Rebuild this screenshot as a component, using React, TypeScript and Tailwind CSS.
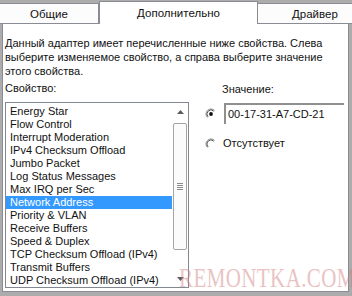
import React from "react";

// Свойства сетевого адаптера — вкладка «Дополнительно»
const PROPS = [
  "Energy Star",
  "Flow Control",
  "Interrupt Moderation",
  "IPv4 Checksum Offload",
  "Jumbo Packet",
  "Log Status Messages",
  "Max IRQ per Sec",
  "Network Address",
  "Priority & VLAN",
  "Receive Buffers",
  "Speed & Duplex",
  "TCP Checksum Offload (IPv4)",
  "Transmit Buffers",
  "UDP Checksum Offload (IPv4)",
];

function Radio({ checked }: { checked?: boolean }) {
  return (
    <svg width="12" height="12" viewBox="0 0 12 12" className="shrink-0">
      <circle cx="6" cy="6" r="5" fill="#fff" />
      <path d="M9.54 2.46 A5 5 0 0 0 2.46 9.54" stroke="#8c8c8c" strokeWidth="1" fill="none" />
      <path d="M8.83 3.17 A4 4 0 0 0 3.17 8.83" stroke="#5a5a5a" strokeWidth="1" fill="none" />
      {checked && <circle cx="6" cy="6" r="1.9" fill="#111" />}
    </svg>
  );
}

function Arrow({ up }: { up?: boolean }) {
  return (
    <svg width="7" height="4" viewBox="0 0 7 4">
      <path d={up ? "M0 4 L3.5 0 L7 4 Z" : "M0 0 L3.5 4 L7 0 Z"} fill="#5c5c5c" />
    </svg>
  );
}

function ListBox() {
  return (
    <div className="mt-[7px] flex h-[186px] w-[184px] border border-[#828790] bg-white">
      <ul className="flex-1 pt-[2px]">
        {PROPS.map((p) => (
          <li
            key={p}
            className={
              p === "Network Address"
                ? "h-[13px] whitespace-nowrap bg-[#3399ff] pl-[4px] text-white"
                : "h-[13px] whitespace-nowrap pl-[4px]"
            }
          >
            {p}
          </li>
        ))}
      </ul>
      {/* полоса прокрутки */}
      <div className="flex w-[16px] flex-col">
        <div className="flex h-[17px] items-center justify-center">
          <Arrow up />
        </div>
        <div className="flex-1 px-px pt-[3px]">
          <div className="flex h-[127px] items-center justify-center rounded-[2px] border border-[#a4a4a4] bg-[#fbfbfb]">
            <div className="flex flex-col gap-[1px]">
              <div className="h-px w-[6px] bg-[#8a8a8a]" />
              <div className="h-px w-[6px] bg-[#8a8a8a]" />
              <div className="h-px w-[6px] bg-[#8a8a8a]" />
              <div className="h-px w-[6px] bg-[#8a8a8a]" />
            </div>
          </div>
        </div>
        <div className="flex h-[17px] items-center justify-center">
          <Arrow />
        </div>
      </div>
    </div>
  );
}

export default function App() {
  return (
    <div className="relative flex h-[296px] w-[352px] flex-col overflow-hidden bg-[#acacac] font-['Liberation_Sans',Arial,sans-serif] text-[11px] leading-[13px] text-[#111]">
      {/* вкладки */}
      <div className="relative z-10 flex h-[24px] items-end text-[11.5px]">
        <div className="flex h-[21px] w-[99px] justify-center border-y border-r border-[#898c95] bg-[#fcfcfc] pt-[4px]">
          Общие
        </div>
        <div className="flex h-[23px] w-[159px] justify-center border-x border-t border-[#898c95] bg-white pt-[5px]">
          Дополнительно
        </div>
        <div className="h-[21px] flex-1 border-y border-[#898c95] bg-[#fcfcfc] pl-[34px] pt-[4px]">
          Драйвер
        </div>
      </div>

      {/* панель вкладки */}
      <div className="-mt-px mb-[4px] ml-[2px] mr-[3px] flex-1 border border-[#898c95] bg-white pl-[2px]">
        <p className="whitespace-nowrap pt-[12px] leading-[14px]">
          Данный адаптер имеет перечисленные ниже свойства. Слева
          <br />
          выберите изменяемое свойство, а справа выберите значение
          <br />
          этого свойства.
        </p>

        <div className="flex">
          <div className="w-[184px]">
            <div className="mt-[4px]">Свойство:</div>
            <ListBox />
          </div>

          <div className="ml-[16px] flex-1">
            <div className="mt-[5px] pl-[17px]">Значение:</div>
            <div className="mt-[7px] flex items-center">
              <Radio checked />
              <div className="ml-[7px] flex h-[21px] w-[120px] items-center border-l-2 border-t-2 border-l-[#8f8f8f] border-t-[#8f8f8f] pl-[2px]">
                00-17-31-A7-CD-21
              </div>
            </div>
            <div className="mt-[13px] flex items-center">
              <Radio />
              <span className="ml-[6px]">Отсутствует</span>
            </div>
          </div>
        </div>
      </div>

      {/* водяной знак */}
      <div className="pointer-events-none absolute left-[179px] top-[267px] origin-top-left scale-y-[1.3] font-['Liberation_Serif',serif] text-[21px] leading-[16px] tracking-[0.4px] text-[#d07c7c] opacity-45">
        REMONTKA.COM
      </div>
    </div>
  );
}
